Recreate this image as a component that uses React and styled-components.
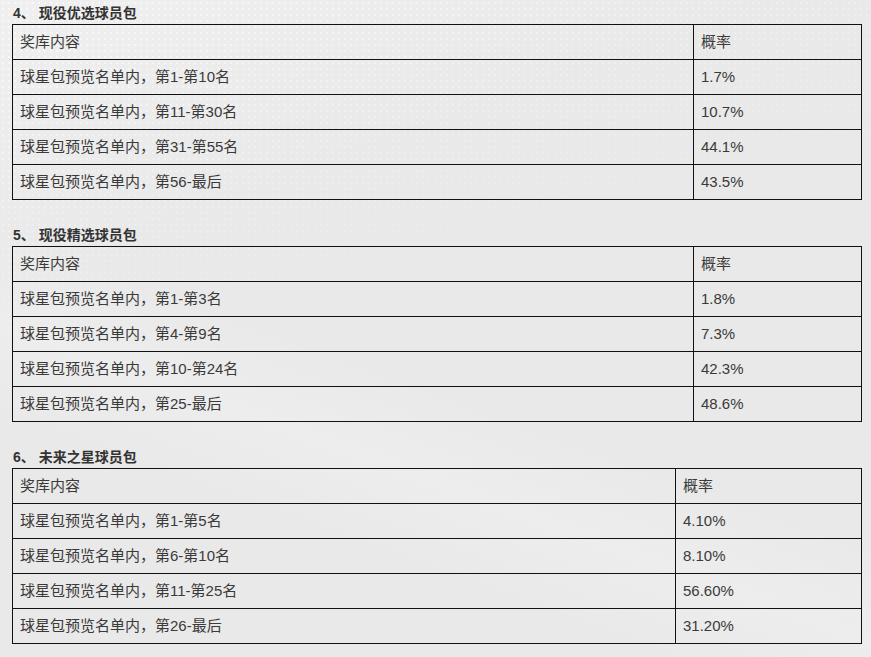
import React from "react";
import styled, { createGlobalStyle } from "styled-components";

const GlobalStyle = createGlobalStyle`
  html, body {
    margin: 0;
    padding: 0;
    background: #e9e9e9;
  }
  body {
    font-family: "Liberation Sans", "Noto Sans CJK SC", sans-serif;
    color: #333;
  }
`;

const Page = styled.div`
  position: relative;
  min-height: 100vh;
  box-sizing: border-box;
  padding: 2px 10px 0 12px;
  background:
    linear-gradient(160deg, rgba(255,255,255,0.3) 0%, rgba(255,255,255,0) 30%),
    linear-gradient(200deg, rgba(255,255,255,0) 55%, rgba(255,255,255,0.18) 65%, rgba(255,255,255,0) 75%),
    #e9e9e9;
  overflow: hidden;

  &::before {
    content: "";
    position: absolute;
    inset: 0;
    pointer-events: none;
    background-image: radial-gradient(circle, rgba(255,255,255,0.55) 1px, transparent 1.6px);
    background-size: 6px 6px;
    -webkit-mask-image: linear-gradient(165deg, rgba(0,0,0,1) 0%, rgba(0,0,0,0.5) 25%, rgba(0,0,0,0) 45%);
    mask-image: linear-gradient(165deg, rgba(0,0,0,1) 0%, rgba(0,0,0,0.5) 25%, rgba(0,0,0,0) 45%);
  }
`;

const Section = styled.section`
  position: relative;
  margin-bottom: 24px;
`;

const Title = styled.h3`
  margin: 0;
  padding-left: 1px;
  font-size: 14px;
  line-height: 22px;
  font-weight: bold;
  color: #333;
`;

const Table = styled.table`
  width: 850px;
  border-collapse: collapse;
  table-layout: fixed;
  font-size: 15px;
  color: #3a3a3a;
`;

const Cell = styled.td`
  border: 1px solid #111;
  height: 35px;
  padding: 0 7px;
  box-sizing: border-box;
  vertical-align: middle;
  line-height: 20px;
  white-space: nowrap;
`;

const sections = [
  {
    title: "4、 现役优选球员包",
    firstCol: 681,
    rows: [
      ["球星包预览名单内，第1-第10名", "1.7%"],
      ["球星包预览名单内，第11-第30名", "10.7%"],
      ["球星包预览名单内，第31-第55名", "44.1%"],
      ["球星包预览名单内，第56-最后", "43.5%"],
    ],
  },
  {
    title: "5、 现役精选球员包",
    firstCol: 681,
    rows: [
      ["球星包预览名单内，第1-第3名", "1.8%"],
      ["球星包预览名单内，第4-第9名", "7.3%"],
      ["球星包预览名单内，第10-第24名", "42.3%"],
      ["球星包预览名单内，第25-最后", "48.6%"],
    ],
  },
  {
    title: "6、 未来之星球员包",
    firstCol: 663,
    rows: [
      ["球星包预览名单内，第1-第5名", "4.10%"],
      ["球星包预览名单内，第6-第10名", "8.10%"],
      ["球星包预览名单内，第11-第25名", "56.60%"],
      ["球星包预览名单内，第26-最后", "31.20%"],
    ],
  },
];

export default function App() {
  return (
    <>
      <GlobalStyle />
      <Page>
        {sections.map((s) => (
          <Section key={s.title}>
            <Title>{s.title}</Title>
            <Table>
              <colgroup>
                <col style={{ width: s.firstCol }} />
                <col />
              </colgroup>
              <tbody>
                <tr>
                  <Cell>奖库内容</Cell>
                  <Cell>概率</Cell>
                </tr>
                {s.rows.map((r) => (
                  <tr key={r[0]}>
                    <Cell>{r[0]}</Cell>
                    <Cell>{r[1]}</Cell>
                  </tr>
                ))}
              </tbody>
            </Table>
          </Section>
        ))}
      </Page>
    </>
  );
}
